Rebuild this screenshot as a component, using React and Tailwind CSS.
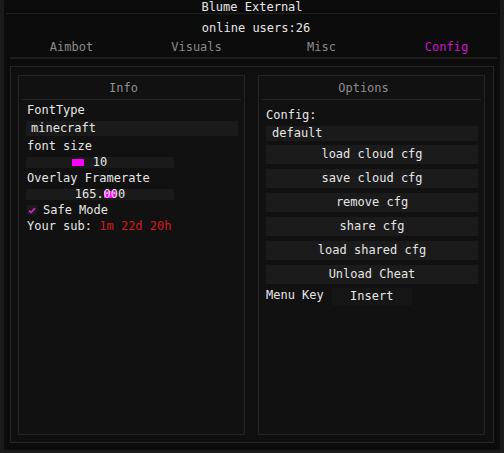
import React from 'react';

const tabs = ['Aimbot', 'Visuals', 'Misc', 'Config'];
const buttons = ['load cloud cfg', 'save cloud cfg', 'remove cfg', 'share cfg', 'load shared cfg', 'Unload Cheat'];

function Panel({ title, children }) {
  return (
    <div className="w-[227px] h-[360px] border border-[#242424] bg-[#111111] flex flex-col">
      <div className="h-[23px] pt-[3px] leading-[18px] text-center pr-[16px] text-[#8e8e8e]">{title}</div>
      <div className="mx-[3px] h-px bg-[#262626]" />
      <div className="pl-[7px] flex flex-col">{children}</div>
    </div>
  );
}

function Slider({ value, grabLeft }) {
  return (
    <div className="relative w-[148px] h-[11px] bg-[#1a1a1a] mt-[4px]">
      <div className="absolute top-[2px] h-[7px] w-[12px] bg-[#ff00ff]" style={{ left: grabLeft }} />
      <div className="absolute inset-0 text-center leading-[11px] text-[#e8e8e8]">{value}</div>
    </div>
  );
}

export default function App() {
  return (
    <div
      className="w-[504px] h-[453px] overflow-hidden bg-[#0c0c0c] border-l-[4px] border-r-[4px] border-b-[3px] border-[#1b1b1b] text-[12px] text-[#e6e6e6] flex flex-col"
      style={{ fontFamily: '"DejaVu Sans Mono", "Liberation Mono", monospace' }}
    >
      {/* title bar */}
      <div className="h-[13px] pt-[1px] leading-[13px] text-center">Blume External</div>
      <div className="ml-[2px] mr-[3px] h-px bg-[#1f1f1f]" />
      <div className="h-[26px] pt-[1px] leading-[26px] text-center pl-[8px]">online users:26</div>

      {/* tabs */}
      <div className="flex h-[12px] pt-[1px] leading-[12px] pl-[5px] w-[510px]">
        {tabs.map((t) => (
          <div
            key={t}
            className={`w-[125px] shrink-0 text-center ${t === 'Config' ? 'text-[#cc14cc]' : 'text-[#8a8a8a]'}`}
          >
            {t}
          </div>
        ))}
      </div>
      <div className="mt-[5px] ml-[6px] mr-[3px] h-[2px] bg-[#1e1e1e]" />

      {/* content */}
      <div className="mt-[7px] ml-[6px] w-[484px] h-[377px] border border-[#252525] bg-[#0f0f0f] flex gap-[13px] pl-[7px] pt-[8px]">
        <Panel title="Info">
          <div className="mt-[3px] leading-[14px] pl-[1px]">FontType</div>
          <div className="mt-[4px] w-[212px] h-[15px] bg-[#1a1a1a] leading-[15px] pl-[5px]">minecraft</div>
          <div className="mt-[3px] leading-[14px] pl-[1px]">font size</div>
          <Slider value="10" grabLeft={46} />
          <div className="mt-[3px] leading-[14px] pl-[1px]">Overlay Framerate</div>
          <Slider value="165.000" grabLeft={78} />
          <div className="mt-[3px] flex items-center h-[14px] pl-[1px]">
            <div className="w-[10px] h-[10px] bg-[#1a1a1a] flex items-center justify-center">
              <svg width="8" height="7" viewBox="0 0 8 7">
                <path d="M1 3.6 L3 5.6 L7 1.2" fill="none" stroke="#e020e0" strokeWidth="1.6" />
              </svg>
            </div>
            <span className="ml-[6px]">Safe Mode</span>
          </div>
          <div className="mt-[2px] leading-[14px] pl-[1px]">
            Your sub: <span className="text-[#d41c1c]">1m 22d 20h</span>
          </div>
        </Panel>

        <Panel title="Options">
          <div className="mt-[8px] leading-[14px]">Config:</div>
          <div className="mt-[4px] w-[212px] h-[15px] bg-[#1a1a1a] leading-[15px] pl-[6px]">default</div>
          <div className="mt-[4px] flex flex-col gap-[5px]">
            {buttons.map((b) => (
              <div key={b} className="w-[212px] h-[19px] bg-[#1b1b1b] leading-[19px] text-center">
                {b}
              </div>
            ))}
          </div>
          <div className="mt-[4px] flex items-start">
            <span className="leading-[14px]">Menu Key</span>
            <div className="ml-[8px] w-[80px] h-[17px] bg-[#161616] leading-[17px] text-center">Insert</div>
          </div>
        </Panel>
      </div>
    </div>
  );
}
